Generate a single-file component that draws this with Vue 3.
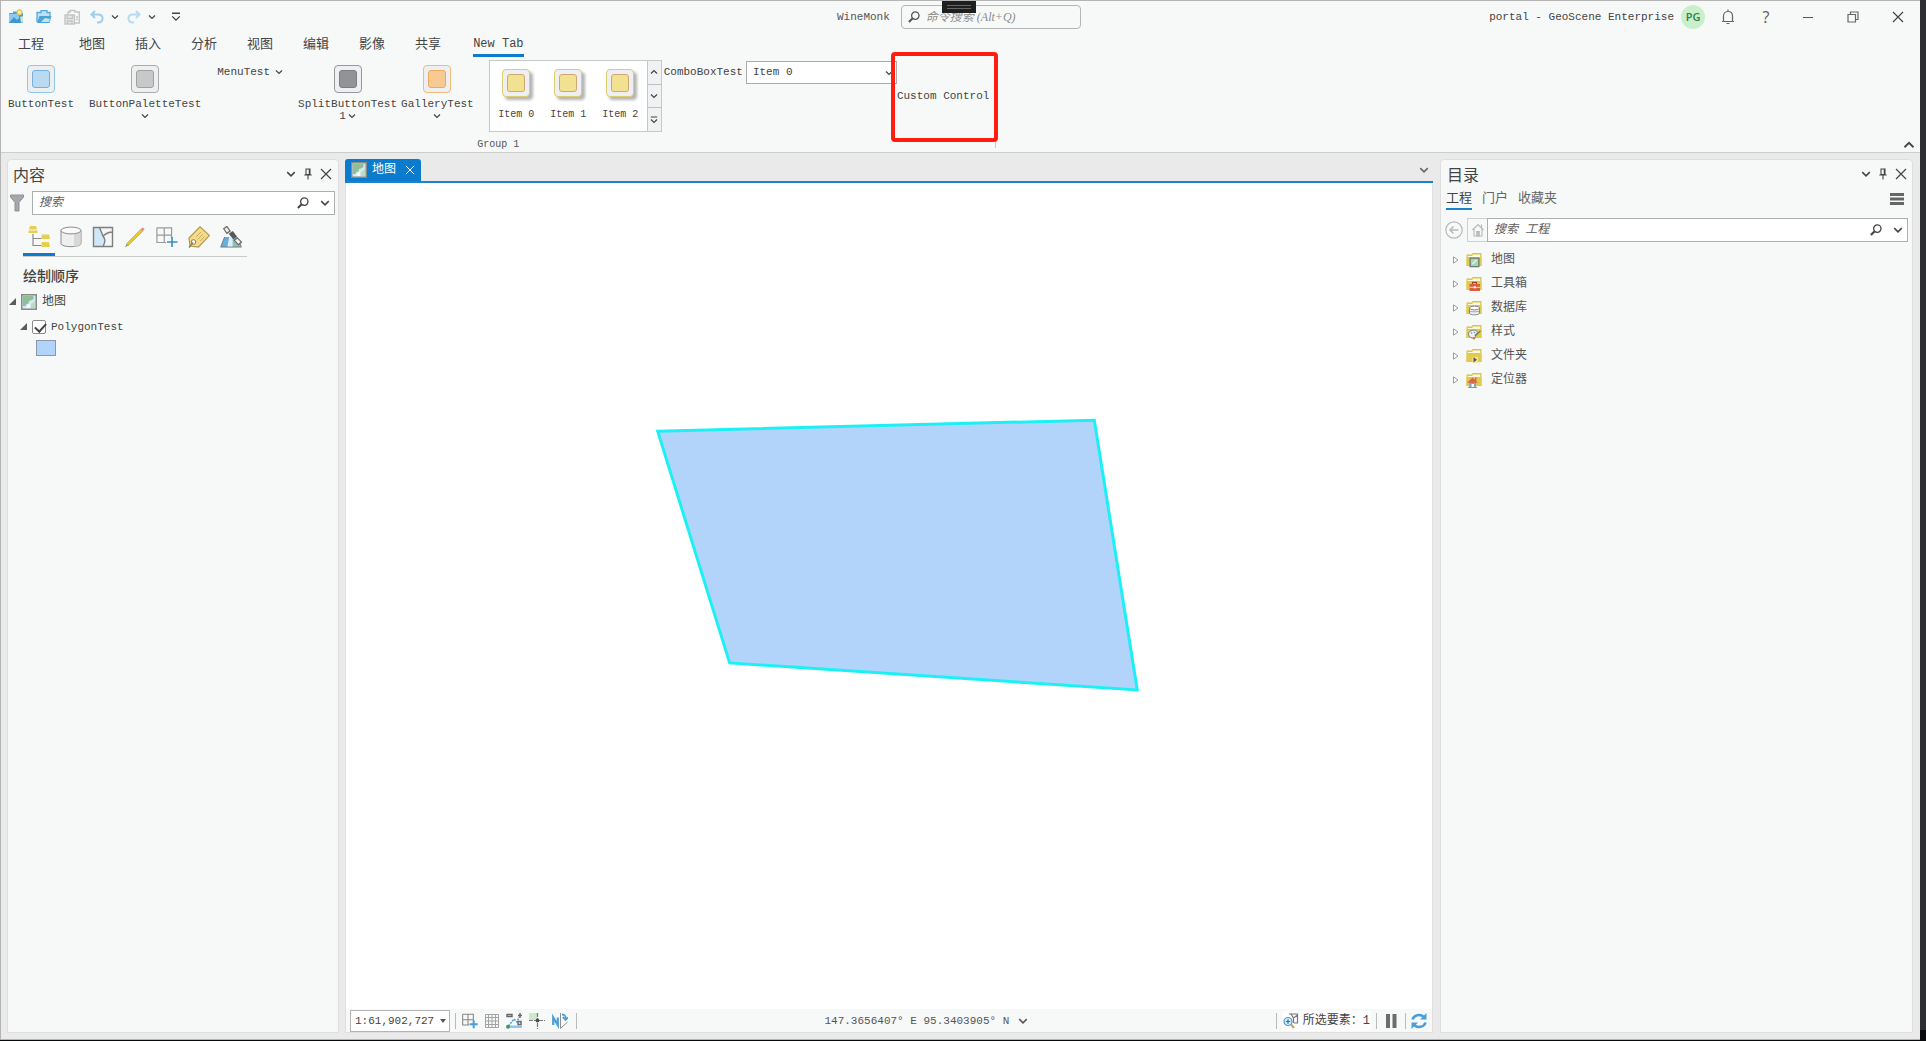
<script setup>
import { ref } from 'vue'

const tabs = ['工程', '地图', '插入', '分析', '视图', '编辑', '影像', '共享', 'New Tab']
const activeTab = ref('New Tab')
const galleryItems = ['Item 0', 'Item 1', 'Item 2']
const combo = ref('Item 0')
const scale = ref('1:61,902,727')
const layerVisible = ref(true)
const catalog = [
  { name: '地图', icon: 'b-map' },
  { name: '工具箱', icon: 'b-toolbox' },
  { name: '数据库', icon: 'b-db' },
  { name: '样式', icon: 'b-style' },
  { name: '文件夹', icon: 'b-link' },
  { name: '定位器', icon: 'b-home' },
]
const listViews = [
  { icon: 'v-order', label: '按绘制顺序列出' },
  { icon: 'v-source', label: '按数据源列出' },
  { icon: 'v-select', label: '按选择列出' },
  { icon: 'v-edit', label: '按编辑列出' },
  { icon: 'v-snap', label: '按捕捉列出' },
  { icon: 'v-label', label: '按标注列出' },
  { icon: 'v-perceive', label: '按感知列出' },
]
</script>

<template>
  <svg class="sprite" aria-hidden="true">
    <defs>
      <symbol id="chev" viewBox="0 0 8 8"><path d="M1 2.5 4 5.5 7 2.5" fill="none" stroke="currentColor" stroke-width="1.2" /></symbol>
      <symbol id="chev-up" viewBox="0 0 8 8"><path d="M1 5.5 4 2.5 7 5.5" fill="none" stroke="currentColor" stroke-width="1.2" /></symbol>
      <symbol id="chev-bar" viewBox="0 0 8 8"><path d="M.8 1h6.4M1 3.5l3 3 3-3" fill="none" stroke="currentColor" stroke-width="1.1" /></symbol>
      <symbol id="close" viewBox="0 0 12 12"><path d="M1 1l10 10M11 1 1 11" fill="none" stroke="currentColor" stroke-width="1.2" /></symbol>
      <symbol id="pin" viewBox="0 0 8 12"><path d="M2 1h4v5.5H2zM.3 7h7.4M4 7v4.5M5.3 1v5.5" fill="none" stroke="currentColor" stroke-width="1.1" /></symbol>
      <symbol id="mag" viewBox="0 0 12 12"><path d="M4.7 7.2.9 11" fill="none" stroke="currentColor" stroke-width="2" /><circle cx="7.3" cy="4.6" r="3.7" fill="none" stroke="currentColor" stroke-width="1.3" /></symbol>
      <symbol id="map" viewBox="0 0 16 16">
        <path d="M.75.75h14.5v14.5H.75z" fill="#d3eaf3" stroke="#8a8a88" stroke-width="1.5" />
        <path d="M2 2h10.500v3L10 6.500 8 7 7.500 9.500 5.500 10 4.500 12H2z" fill="#8fbf97" /><path d="M10 14v-3.500L14 7v7z" fill="#b9dcc2" /><path d="m5 14 1.500-3.500L9 9.500V14z" fill="#f4fafb" />
      </symbol>
      <symbol id="folder" viewBox="0 0 16 16">
        <path d="M.5 14V2.500h5L6.800 1H15.500v13z" fill="#dcc64a" /><path d="M1.800 4h4.200L7.300 2.500H14.200V5H1.800z" fill="#fffbe0" /><path d="M.5 5.500h15V14H.5z" fill="#e0ca50" />
      </symbol>
      <symbol id="b-map" viewBox="0 0 16 16"><path d="M4.100 6.100h8.800v8.500H4.100z" fill="#a5d6b4" stroke="#6b7c78" stroke-width="1.300" /><path d="m6.500 12 4-4" stroke="#e6f7ee" stroke-width="1.500" /></symbol>
      <symbol id="b-toolbox" viewBox="0 0 16 16"><path d="M6.500 8V6.300h4V8" fill="none" stroke="#a4452b" stroke-width="1.200" /><path d="M3.500 8H14v7H3.500z" fill="#d9603f" /><path d="M3.500 11.300H14" stroke="#f6d2c8" /><path d="M7.800 10.300h2v2h-2z" fill="#fff" /></symbol>
      <symbol id="b-db" viewBox="0 0 16 16"><path d="M3.500 8v5c0 2.400 10 2.400 10 0V8z" fill="#f0f0f0" stroke="#85888c" /><ellipse cx="8.500" cy="8" rx="5" ry="1.900" fill="#fff" stroke="#85888c" /><path d="M3.500 11c0 1 10 1 10 0" fill="none" stroke="#85888c" stroke-width=".7" /></symbol>
      <symbol id="b-style" viewBox="0 0 16 16"><path d="M2.500 10c0-3 4-4.500 7-3.500 3 1 2 3 .5 3.500s0 2.500-1 3.500c-2 1.500-6.500 0-6.500-3.500z" fill="#eef1f4" stroke="#7f858c" /><circle cx="5.500" cy="9" r=".8" fill="#5a9bd0" /><circle cx="8.500" cy="8.500" r=".8" fill="#57a36a" /><path d="m9 12 5.500-5" stroke="#777" stroke-width="1.200" /><circle cx="8" cy="14.300" r="1.300" fill="#d08050" /></symbol>
      <symbol id="b-link" viewBox="0 0 16 16"><path d="M6.500 9h5.500v6H6.500z" fill="#f1e7a4" /><path d="m7.500 9 3.500 2.700-3.500 2.700z" fill="#555" /></symbol>
      <symbol id="b-home" viewBox="0 0 16 16"><path d="M3.200 10.500h6.800v5H3.200z" fill="#7fa9c4" /><path d="M1 10.800 6.500 5.500l5.500 5.300z" fill="#dd6247" /><path d="M9 5.500h1.500v3H9z" fill="#dd6247" /><path d="M5.600 12h2.300v3.500H5.600z" fill="#fff" /><path d="M2 15.500h9" stroke="#5bb37a" /></symbol>

      <symbol id="v-order" viewBox="0 0 22 22"><path d="M5 8v11.500h8M5 12.500h8" fill="none" stroke="#8a8a8a" stroke-width="1.200" /><path d="M2 0h6l1 3.500H1zM.500 4.500h9V7h-9zM14 8.500h7L22 13h-9zM14 16h7l1 5h-9z" fill="#e5cf4e" /></symbol>
      <symbol id="v-source" viewBox="0 0 22 22"><path d="M1 4.500v13c0 4.200 20 4.200 20 0v-13z" fill="#efefef" stroke="#8c8c8c" /><path d="M14 6v14.500c4-.3 6.500-1.300 6.500-3V5z" fill="#d8d8d8" /><ellipse cx="11" cy="4.500" rx="10" ry="3.400" fill="#fafafa" stroke="#8c8c8c" /></symbol>
      <symbol id="v-select" viewBox="0 0 22 22"><path d="M1.500 1.500h19v19h-19z" fill="#f5f5f5" /><path d="M1.500 1.500H8l3 8.500 2 5-2 5.500H1.500z" fill="#cfe8f7" /><path d="M1.500 1.500h19v19h-19zM7.500 1.500 11 10M20 6c-3 0-6 1.500-9 4 2 3 3 5 0 10.500" fill="none" stroke="#7e7e7e" stroke-width="1.400" /></symbol>
      <symbol id="v-edit" viewBox="0 0 22 22"><path d="m2.500 17.800 14.200-14.500 2 2L4.300 19.600z" fill="#e5c83e" stroke="#b99d2d" stroke-width=".6" /><path d="m16.700 3.300 2-2 2 2-2 2z" fill="#e98b80" /><path d="M2.500 17.800 1 21.200l3.300-1.600z" fill="#a98c6a" /></symbol>
      <symbol id="v-snap" viewBox="0 0 24 22"><path d="M1 1h16v11M1 1v16h10M9 1v16M1 9h16" fill="none" stroke="#999" stroke-width="1.300" /><path d="M17.500 11v11M12 16.500h11.500" stroke="#3b8ec2" stroke-width="1.800" /></symbol>
      <symbol id="v-label" viewBox="0 0 22 22"><path d="M1 12 12 .800 21.500 9.500 10.500 21 2 20z" fill="#f4dc8c" stroke="#b59a4c" stroke-width="1.200" /><path d="m8 11 5-5M9.500 13.500l5.500-5.500M12 15l4.500-4.500" stroke="#c9ad5c" /><circle cx="5.500" cy="16" r="2.300" fill="#fff" stroke="#8b7b50" /><path d="m5 16.500-4 5" stroke="#8b7b50" stroke-width="1.300" /></symbol>
      <symbol id="v-perceive" viewBox="0 0 24 24"><path d="M5 12h14l4.500 11H.500z" fill="#66aede" /><path d="M10 12h4v11H8z" fill="#d7eefb" /><path d="m14 14 5-1 4 9.500h-9z" fill="#8fc3a8" /><path d="M5 12 .800 23h22.400L19 13" fill="none" stroke="#777" /><path d="m4 3 3.500-2.500 3.500 5L7.500 8zM15.500 15.500 19 13l4.500 4.500-3.500 3z" fill="#f2f2f2" stroke="#666" stroke-width="1.300" /><path d="m9.500 8.500 4.500-3 4.500 6-4 3z" fill="#585858" /></symbol>
    </defs>
  </svg>

  <div class="screen">
    <div class="window">
      <header class="ribbon">
        <div class="titlebar">
          <div class="quick">
            <button aria-label="新建工程"><svg width="16" height="16" viewBox="0 0 16 16"><path d="M1 4h4V2.500h4V4h6v10H1z" fill="#4aa3db" /><path d="M1 5h9l3 9H1z" fill="#8ecaee" /><path d="m1 14 5-6 3 3 5-5v8z" fill="#3f97d1" /><path d="m12 8 3-1v6.500h-2z" fill="#cfe6c2" /><circle cx="11.500" cy="3.200" r="2.300" fill="#fff6c8" stroke="#e6c84e" stroke-width="1.500" /></svg></button>
            <button aria-label="打开工程"><svg width="16" height="16" viewBox="0 0 16 16"><path d="M1 13V3.500h4V1.700h6v1.800h3V7" fill="#bfe1f5" stroke="#57a9dc" stroke-width="1.300" /><path d="M3.500 7h12l-2 7H1z" fill="#4aa3db" /><path d="m5 13 4-4 5 1-1 3z" fill="#c7e5d8" /></svg></button>
            <button aria-label="保存工程"><svg width="16" height="16" viewBox="0 0 16 16" fill="none" stroke="#c3c5c5" stroke-width="1.400"><path d="M4 5V3h2V1.500h5V3h4.300v11H11" /><path d="M1 6h9.500v9H1z" fill="#e7e8e8" /><path d="M3 6v3.500h5.500V6M3.500 15v-3H8v3M12 8h2M12 10.500h2" /></svg></button>
            <button aria-label="撤消"><svg width="14" height="14" viewBox="0 0 14 14" fill="none" stroke="#9fcdec" stroke-width="2"><path d="M5 1 1.500 4.500 5 8M2 4.500h6c6 0 6 8 .500 8H7" /></svg></button>
            <button aria-label="撤消列表"><svg width="8" height="8"><use href="#chev" /></svg></button>
            <button aria-label="恢复"><svg width="14" height="14" viewBox="0 0 14 14" fill="none" stroke="#b8daf0" stroke-width="2"><path d="m9 1 3.500 3.500L9 8M12 4.500H6c-6 0-6 8-.500 8H7" /></svg></button>
            <button aria-label="恢复列表"><svg width="8" height="8"><use href="#chev" /></svg></button>
            <button class="qat" aria-label="自定义快速访问工具栏"><svg width="10" height="10"><use href="#chev-bar" /></svg></button>
          </div>
          <div class="command">
            <span>WineMonk</span>
            <label class="command-box">
              <svg width="12" height="12"><use href="#mag" /></svg>
              <input type="text" placeholder="命令搜索 (Alt+Q)" aria-label="命令搜索">
              <span class="grip"></span>
            </label>
          </div>
          <div class="account">
            <span>portal - GeoScene Enterprise</span>
            <span class="avatar">PG</span>
            <button aria-label="通知"><svg width="14" height="16" viewBox="0 0 14 16" fill="none" stroke="#666" stroke-width="1.200"><path d="M1 12.500h12M2.500 12.500V7c0-6 9-6 9 0v5.500M7 2.500V.500M5.500 14.500h3" /></svg></button>
            <button class="help" aria-label="帮助">?</button>
            <button aria-label="最小化"><svg width="12" height="12"><path d="M1 6.500h10" stroke="#555" /></svg></button>
            <button aria-label="还原"><svg width="12" height="12" fill="none" stroke="#666" stroke-width="1.200"><path d="M1 3.500h7.500V11H1zM3.500 3.500V1H11v7.500H8.500" /></svg></button>
            <button aria-label="关闭"><svg width="12" height="12"><use href="#close" /></svg></button>
          </div>
        </div>

        <nav class="tabs">
          <button v-for="t in tabs" :key="t" :class="{ active: t === activeTab, file: t === '工程' }" @click="activeTab = t">{{ t }}</button>
        </nav>

        <div class="ribbon-body">
          <section class="group">
            <div class="tools">
              <button class="tool"><i class="tile blue"></i><span>ButtonTest</span></button>
              <button class="tool palette"><i class="tile grey"></i><span>ButtonPaletteTest</span><svg width="8" height="8"><use href="#chev" /></svg></button>
              <button class="menu">MenuTest<svg width="8" height="8"><use href="#chev" /></svg></button>
              <button class="tool split"><i class="tile dark"></i><span>SplitButtonTest</span><span class="second">1<svg width="8" height="8"><use href="#chev" /></svg></span></button>
              <button class="tool"><i class="tile orange"></i><span>GalleryTest</span><svg width="8" height="8"><use href="#chev" /></svg></button>
              <div class="gallery">
                <div class="items">
                  <button v-for="g in galleryItems" :key="g"><i class="tile yellow"></i><span>{{ g }}</span></button>
                </div>
                <div class="scroller">
                  <button aria-label="上一行"><svg width="8" height="8"><use href="#chev-up" /></svg></button>
                  <button aria-label="下一行"><svg width="8" height="8"><use href="#chev" /></svg></button>
                  <button aria-label="展开"><svg width="8" height="8"><use href="#chev-bar" /></svg></button>
                </div>
              </div>
              <div class="combo">
                <label for="combo">ComboBoxTest</label>
                <div class="select-wrap">
                  <select id="combo" v-model="combo"><option v-for="g in galleryItems" :key="g">{{ g }}</option></select>
                  <svg width="8" height="8"><use href="#chev" /></svg>
                </div>
              </div>
              <div class="custom">Custom Control<span class="marker"></span></div>
            </div>
            <h2>Group 1</h2>
          </section>
          <button class="collapse" aria-label="折叠功能区"><svg width="12" height="12"><use href="#chev-up" /></svg></button>
        </div>
      </header>

      <main class="workspace">
        <aside class="panel contents">
          <div class="panel-head">
            <h1>内容</h1>
            <button aria-label="菜单"><svg width="10" height="10"><use href="#chev" /></svg></button>
            <button aria-label="自动隐藏"><svg width="8" height="12"><use href="#pin" /></svg></button>
            <button aria-label="关闭"><svg width="12" height="12"><use href="#close" /></svg></button>
          </div>
          <div class="search-row">
            <svg width="14" height="18" viewBox="0 0 14 18"><path d="M.500 1h13v2L9 8.500V17H5V8.500L.500 3z" fill="#a5a7aa" stroke="#8d8f92" /></svg>
            <div class="search">
              <input type="text" placeholder="搜索" aria-label="搜索">
              <svg width="12" height="12"><use href="#mag" /></svg>
              <svg width="10" height="10"><use href="#chev" /></svg>
            </div>
          </div>
          <div class="views">
            <button v-for="(v, i) in listViews" :key="v.icon" :class="{ active: i === 0 }" :aria-label="v.label"><svg width="22" height="22"><use :href="'#' + v.icon" /></svg></button>
          </div>
          <h3>绘制顺序</h3>
          <div class="tree-row">
            <svg width="7" height="7" viewBox="0 0 7 7"><path d="M7 0v7H0z" fill="#5c5c5c" /></svg>
            <svg width="16" height="16"><use href="#map" /></svg>
            <span>地图</span>
          </div>
          <div class="tree-row layer">
            <svg width="7" height="7" viewBox="0 0 7 7"><path d="M7 0v7H0z" fill="#5c5c5c" /></svg>
            <label><input v-model="layerVisible" type="checkbox"><span>PolygonTest</span></label>
          </div>
          <div class="swatch"></div>
        </aside>

        <section class="view">
          <div class="doc-tabs">
            <div class="doc-tab">
              <svg width="16" height="16"><use href="#map" /></svg>
              <span>地图</span>
              <button aria-label="关闭地图"><svg width="10" height="10" viewBox="0 0 12 12"><use href="#close" /></svg></button>
            </div>
            <button class="doc-menu" aria-label="文档列表"><svg width="10" height="10"><use href="#chev" /></svg></button>
          </div>
          <svg class="map" viewBox="0 0 1087 826" role="img" aria-label="地图视图">
            <path d="M312 248 749 237 792 507 384 480z" fill="#b2d4fb" stroke="#1df0f4" stroke-width="3" />
          </svg>
          <footer class="status">
            <div class="scale">
              <select v-model="scale" aria-label="比例尺"><option>1:61,902,727</option></select>
              <svg width="6" height="4"><path d="M0 0h6L3 4z" fill="#555" /></svg>
            </div>
            <i class="sep"></i>
            <div class="status-tools">
              <button aria-label="捕捉"><svg width="16" height="16" viewBox="0 0 24 22"><path d="M1 1h16v9M1 1v16h10M9 1v16M1 9h16" fill="none" stroke="#858585" stroke-width="1.600" /><path d="M17.500 10v12M11.500 16h12" stroke="#4a9fd6" stroke-width="3" /></svg></button>
              <button aria-label="格网"><svg width="14" height="14" viewBox="0 0 14 14" fill="none" stroke="#a2a2a2"><path d="M.500.500h13v13H.500zM3.500 0v14M7 0v14M10.500 0v14M0 3.500h14M0 7h14M0 10.500h14" /></svg></button>
              <button aria-label="动态约束"><svg width="16" height="16" viewBox="0 0 16 16"><path d="M1 12.500h15V15H1z" fill="#8fc6ec" /><path d="M2.500 13 8 6l3 3 2-5" fill="none" stroke="#4f9bd3" stroke-width="1.500" stroke-dasharray="2 1" /><path d="M1 1.500h5v2H1zM12 2.500h4M14 0v5M12 8.500h3v3h-3z" fill="none" stroke="#666" stroke-width="1.400" /><circle cx="2" cy="13.700" r="2" fill="#3f9a4f" /></svg></button>
              <button aria-label="推断约束"><svg width="16" height="16" viewBox="0 0 16 16"><path d="M0 0h8v7H0z" fill="#cfe8cc" /><path d="M0 7.500h16M8.500 0v16" stroke="#7a7a7a" stroke-width="1.200" stroke-dasharray="4 1" /><circle cx="8.500" cy="7.500" r="1.900" fill="#4d4d4d" /></svg></button>
              <button aria-label="校正"><svg width="16" height="16" viewBox="0 0 16 16"><path d="M1.200 12V4.500l4.600 7.500V4.500" fill="none" stroke="#4a9fd6" stroke-width="2.200" /><path d="M8.500 0v15.500L15.500 9" fill="none" stroke="#8d8d8d" /><path d="M10 1.500c3 0 4 2 3.500 5M10.800 4l2.700 3L16 4.500" fill="none" stroke="#4a9fd6" stroke-width="1.800" /></svg></button>
            </div>
            <i class="sep"></i>
            <button class="coords">147.3656407° E 95.3403905° N<svg width="10" height="10"><use href="#chev" /></svg></button>
            <i class="sep"></i>
            <button class="selected"><svg width="16" height="16" viewBox="0 0 16 16"><path d="M6 1h8.500v9H11M8 1l2.500 4 4-3M10.500 5v5" fill="none" stroke="#777" stroke-width="1.200" /><circle cx="5" cy="8.500" r="4" fill="#d8eefb" stroke="#4c9bd0" stroke-width="1.200" /><path d="M5 6.300v4.400M2.800 8.500h4.400" stroke="#2f6e9c" stroke-width="1.200" /><path d="m8 11.500 3 3.500" stroke="#d99a4e" stroke-width="2" /></svg>所选要素：1</button>
            <i class="sep"></i>
            <button class="pause" aria-label="暂停绘制"><svg width="12" height="14"><path d="M1 0h4v14H1zM7.500 0h4v14h-4z" fill="#6c6c6c" /></svg></button>
            <i class="sep"></i>
            <button aria-label="刷新"><svg width="16" height="16" viewBox="0 0 16 16" fill="none" stroke="#4a9fdb" stroke-width="2.600"><path d="M1.500 6.500C3 1.500 9.500.800 13 4M14.500 9.500C13 14.500 6.500 15.200 3 12" /><path d="M15.500 0v6.500H9zM.500 16V9.500H7z" fill="#4a9fdb" stroke="none" /></svg></button>
          </footer>
        </section>

        <aside class="panel catalog">
          <div class="panel-head">
            <h1>目录</h1>
            <button aria-label="菜单"><svg width="10" height="10"><use href="#chev" /></svg></button>
            <button aria-label="自动隐藏"><svg width="8" height="12"><use href="#pin" /></svg></button>
            <button aria-label="关闭"><svg width="12" height="12"><use href="#close" /></svg></button>
          </div>
          <div class="cat-tabs">
            <button class="active">工程</button>
            <button>门户</button>
            <button>收藏夹</button>
            <button class="burger" aria-label="选项"><svg width="14" height="14"><path d="M0 2.500h14M0 7h14M0 11.500h14" stroke="#666" stroke-width="3" /></svg></button>
          </div>
          <div class="search-row">
            <button aria-label="返回"><svg width="18" height="18" viewBox="0 0 18 18" fill="none" stroke="#b9b9b9" stroke-width="1.200"><circle cx="9" cy="9" r="8.200" /><path d="M13.500 9H5M8.500 5.500 5 9l3.500 3.500" stroke-width="1.500" /></svg></button>
            <button class="home" aria-label="主页"><svg width="12" height="14" viewBox="0 0 12 14" fill="none" stroke="#b5b5b5" stroke-width="1.100"><path d="M.500 7 6 1.500 11.500 7M2 6v7h8V6M9.500 4.500V1.500" /><path d="M4.800 8.500h2.400V13H4.800z" fill="#c4c4c4" /></svg></button>
            <div class="search">
              <input type="text" placeholder="搜索 工程" aria-label="搜索 工程">
              <svg width="12" height="12"><use href="#mag" /></svg>
              <svg width="10" height="10"><use href="#chev" /></svg>
            </div>
          </div>
          <ul>
            <li v-for="c in catalog" :key="c.name">
              <svg width="6" height="8" viewBox="0 0 6 8"><path d="M.500.800v6.400L5 4z" fill="#fff" stroke="#9a9a9a" /></svg>
              <svg width="16" height="16" viewBox="0 0 16 16"><use href="#folder" /><use :href="'#' + c.icon" /></svg>
              <span>{{ c.name }}</span>
            </li>
          </ul>
        </aside>
      </main>
    </div>
  </div>
</template>

<style>
body { margin: 0; }
</style>

<style scoped>
.sprite { position: absolute; width: 0; height: 0; }
.screen {
  box-sizing: border-box;
  display: flex;
  min-height: 100vh;
  padding: 0 6px 1px 0;
  background: linear-gradient(#2d2e32, #2d2e32) no-repeat 0 0 / 100% calc(100% - 11px), #08090a;
  color: #444;
  font: 11px/12px "Liberation Mono", "Noto Sans CJK SC", monospace;
}
.screen * { box-sizing: border-box; }
button, input, select { font: inherit; color: inherit; }
button { display: flex; align-items: center; justify-content: center; padding: 0; border: 0; background: none; }
svg { flex: none; display: block; }
h1, h2, h3, ul { margin: 0; padding: 0; font-weight: 400; list-style: none; }

.window {
  flex: 1;
  min-width: 0;
  display: flex;
  flex-direction: column;
  border: 1px solid #b4b4b4;
  border-right: 0;
  background: #eaeaea;
}
.ribbon { background: #f7f9f8; border-bottom: 1px solid #cdcdcd; }
.titlebar { display: grid; grid-template-columns: 836px 1fr auto; align-items: center; height: 31px; }
.quick { display: flex; align-items: center; gap: 12px; padding-left: 7px; }
.quick button:nth-child(4), .quick button:nth-child(6) { margin: 0 -5px 0 -2px; }
.quick button:nth-child(6) { margin-left: -4px; }
.qat { margin-left: 3px; }
.command { display: flex; align-items: center; gap: 11px; color: #555; }
.command-box {
  position: relative;
  display: flex;
  align-items: center;
  gap: 6px;
  width: 180px;
  height: 24px;
  padding: 0 6px;
  border: 1px solid #b4b6b6;
  border-radius: 4px;
}
input[type="text"] { flex: 1; min-width: 0; border: 0; padding: 0; outline: 0; background: none; font-size: 12px; line-height: 16px; }
input::placeholder { color: #5c5c5c; opacity: 1; font-style: italic; }
.command-box input { font-family: "Liberation Serif", "Noto Sans CJK SC", serif; }
.command-box input::placeholder { color: #8c8c8c; }
.grip {
  position: absolute;
  left: 40px;
  top: -5px;
  width: 34px;
  height: 12px;
  background: linear-gradient(#666, #666) no-repeat 5px 4px / 24px 1px, linear-gradient(#666, #666) no-repeat 5px 7px / 24px 1px, #1d1e1e;
}
.account { display: flex; align-items: center; }
.account button { width: 45px; height: 30px; }
.account button:nth-of-type(1) { width: 38px; margin-left: 4px; }
.account .help { width: 38px; font: 16px/20px "Noto Sans", sans-serif; color: #666; }
.avatar {
  width: 24px;
  margin-left: 7px;
  border-radius: 12px;
  background: #c9f0cb;
  color: #2f7d4a;
  text-align: center;
  font: 600 11px/24px "Open Sans", sans-serif;
}

.tabs { display: flex; gap: 30px; height: 25px; padding-left: 17px; }
.tabs button { padding-top: 3px; font-size: 13px; line-height: 19px; border-bottom: 3px solid transparent; }
.tabs .file { margin-right: 5px; }
.tabs .active { margin-left: 2px; font-size: 12px; border-color: #0b7bcd; }

.ribbon-body { display: flex; justify-content: space-between; align-items: flex-end; padding-top: 3px; height: 95px; }
.group { align-self: flex-start; height: 88px; border-right: 1px solid #c6c8c8; }
.group h2 { padding-top: 1px; font-size: 10px; line-height: 16px; color: #555; text-align: center; }
.tools { display: flex; height: 76px; padding: 0 6px 0 7px; }
.tool { flex-direction: column; justify-content: flex-start; height: 62px; padding-top: 5px; }
.tool > span { margin-top: 5px; }
.tool > svg { margin-top: 2px; }
.tool .second { display: flex; align-items: center; gap: 2px; margin-top: 0; }
.palette { margin: 0 16px 0 15px; }
.menu { height: 24px; gap: 5px; }
.split { margin: 0 4px 0 15px; }
.tile { position: relative; display: block; width: 28px; height: 28px; border: 1px solid var(--line); border-radius: 4px; background: #eeeff0; }
.tile::after { content: ""; position: absolute; inset: 4px; border: 1px solid var(--edge); border-radius: 3px; background: var(--fill); }
.blue { --line: #92c6ee; --edge: #74b0e0; --fill: #b9daf0; }
.grey { --line: #a9abad; --edge: #a0a0a0; --fill: #c8c8c8; }
.dark { --line: #98999c; --edge: #7d7e82; --fill: #929397; }
.orange { --line: #f3bb7a; --edge: #edaa5a; --fill: #f8ca93; }
.yellow { --line: #ddcc70; --edge: #d2a673; --fill: #f0e290; box-shadow: 3px 3px 3px #b4b4b4; }
.gallery { display: flex; width: 173px; height: 72px; margin-left: 15px; border: 1px solid #c6c8cb; background: #fff; }
.items { flex: 1; display: flex; justify-content: center; padding-top: 8px; }
.items button { flex-direction: column; justify-content: flex-start; width: 52px; font-size: 10px; gap: 12px; }
.scroller { display: flex; flex-direction: column; width: 14px; border-left: 1px solid #c6c8cb; background: #f0f1f2; }
.scroller button { flex: 1; }
.scroller button + button { border-top: 1px solid #bcbec1; }
.combo { display: flex; align-items: center; gap: 3px; height: 24px; margin-left: 2px; }
.select-wrap { position: relative; width: 151px; }
.select-wrap select { display: block; width: 100%; height: 23px; padding: 0 6px; border: 1px solid #ababab; border-radius: 0; background: #fff; appearance: none; }
.select-wrap svg { position: absolute; right: 4px; top: 8px; pointer-events: none; }
.custom { position: relative; height: 72px; line-height: 72px; }
.marker { position: absolute; inset: -8px -9px -10px -6px; border: 4px solid #ff1d12; border-radius: 4px; }
.collapse { margin: 0 5px 1px 0; }

.workspace { flex: 1; display: flex; padding: 6px 7px 6px 6px; }
.panel { display: flex; flex-direction: column; border: 1px solid #dedede; border-radius: 4px 4px 0 0; background: #f7f9f8; }
.contents { width: 332px; margin-right: 6px; }
.catalog { width: 473px; margin-left: 7px; }
.panel-head { display: flex; align-items: center; gap: 8px; height: 28px; padding: 0 6px 0 5px; }
.panel-head h1 { flex: 1; font: 16px/24px "Noto Sans CJK SC", sans-serif; }
.search-row { display: flex; align-items: center; height: 24px; }
.search { flex: 1; display: flex; align-items: center; gap: 11px; height: 24px; padding: 0 4px 0 6px; border: 1px solid #adafaf; background: #fff; }
.contents .search-row { gap: 8px; margin-top: 3px; padding: 0 3px 0 2px; }
.views { display: flex; align-self: flex-start; margin: 5px 0 0 15px; border-bottom: 1px solid #c9cbcb; }
.views button { width: 32px; height: 36px; border-bottom: 3px solid transparent; }
.views .active { border-color: #0b7bcd; }
h3 { margin: 8px 0 4px 15px; font: 500 14px/20px "Noto Sans CJK SC", sans-serif; }
.tree-row { display: flex; align-items: center; gap: 5px; height: 25px; padding-left: 1px; font-size: 12px; }
.layer { padding-left: 12px; font-size: 11px; }
.layer label { display: flex; align-items: center; gap: 5px; }
input[type="checkbox"] { appearance: none; width: 14px; height: 14px; margin: 0; border: 1px solid #8c8c8c; border-radius: 2px; background: #fff; }
input[type="checkbox"]:checked::after { content: ""; display: block; width: 5px; height: 9px; margin: 0 0 0 4px; border: solid #444; border-width: 0 2px 2px 0; transform: rotate(42deg); }
.swatch { width: 20px; height: 16px; margin: 1px 0 0 28px; border: 1px solid #8d97a5; background: #b2d4fb; }

.view { flex: 1; min-width: 0; display: flex; flex-direction: column; }
.doc-tabs { display: flex; justify-content: space-between; height: 24px; border-bottom: 2px solid #1c82cb; }
.doc-tab { display: flex; align-items: center; gap: 5px; padding: 0 6px; border-radius: 3px 3px 0 0; background: #0b7bcd; color: #fff; font-size: 12px; }
.doc-tab button { margin-left: 4px; }
.doc-menu { margin-right: 4px; color: #666; }
.map { flex: 1; width: 100%; min-height: 0; border: solid #e0e0e0; border-width: 0 1px; background: #fff; }
.status { display: flex; align-items: center; height: 24px; padding: 0 5px 0 4px; border: 1px solid #dedede; border-top: 0; background: #f7f9f8; }
.scale { position: relative; width: 100px; }
.scale select { display: block; width: 100%; height: 22px; padding: 0 4px; border: 1px solid #b4b4b4; border-radius: 0; background: #fff; appearance: none; }
.scale svg { position: absolute; right: 4px; top: 9px; pointer-events: none; }
.sep { width: 1px; height: 16px; margin: 0 5px; background: #b9bbbb; }
.status-tools { display: flex; gap: 7px; margin: 0 3px 0 1px; }
.coords { flex: 1; gap: 9px; color: #555; }
.selected { gap: 4px; height: 20px; padding: 0 1px; background: #fdfdfd; font-size: 12px; }
.pause { margin: 0 3px; }

.cat-tabs { display: flex; gap: 10px; height: 21px; margin-top: 1px; padding: 0 8px 0 5px; color: #666; }
.cat-tabs button { font-size: 13px; line-height: 19px; border-bottom: 2px solid transparent; }
.cat-tabs .active { border-color: #1c82cb; color: #444; }
.cat-tabs .burger { margin-left: auto; }
.catalog .panel-head { padding: 0 5px 0 6px; }
.catalog .search-row { margin-top: 8px; padding: 0 4px; }
.home { width: 20px; height: 24px; margin-left: 4px; border: 1px solid #cfd1d1; border-right: 0; }
.catalog ul { padding: 6px 0 0 12px; }
.catalog li { display: flex; align-items: center; height: 24px; font-size: 12px; color: #555; }
.catalog li svg + svg { margin: 0 9px 0 7px; }
</style>
